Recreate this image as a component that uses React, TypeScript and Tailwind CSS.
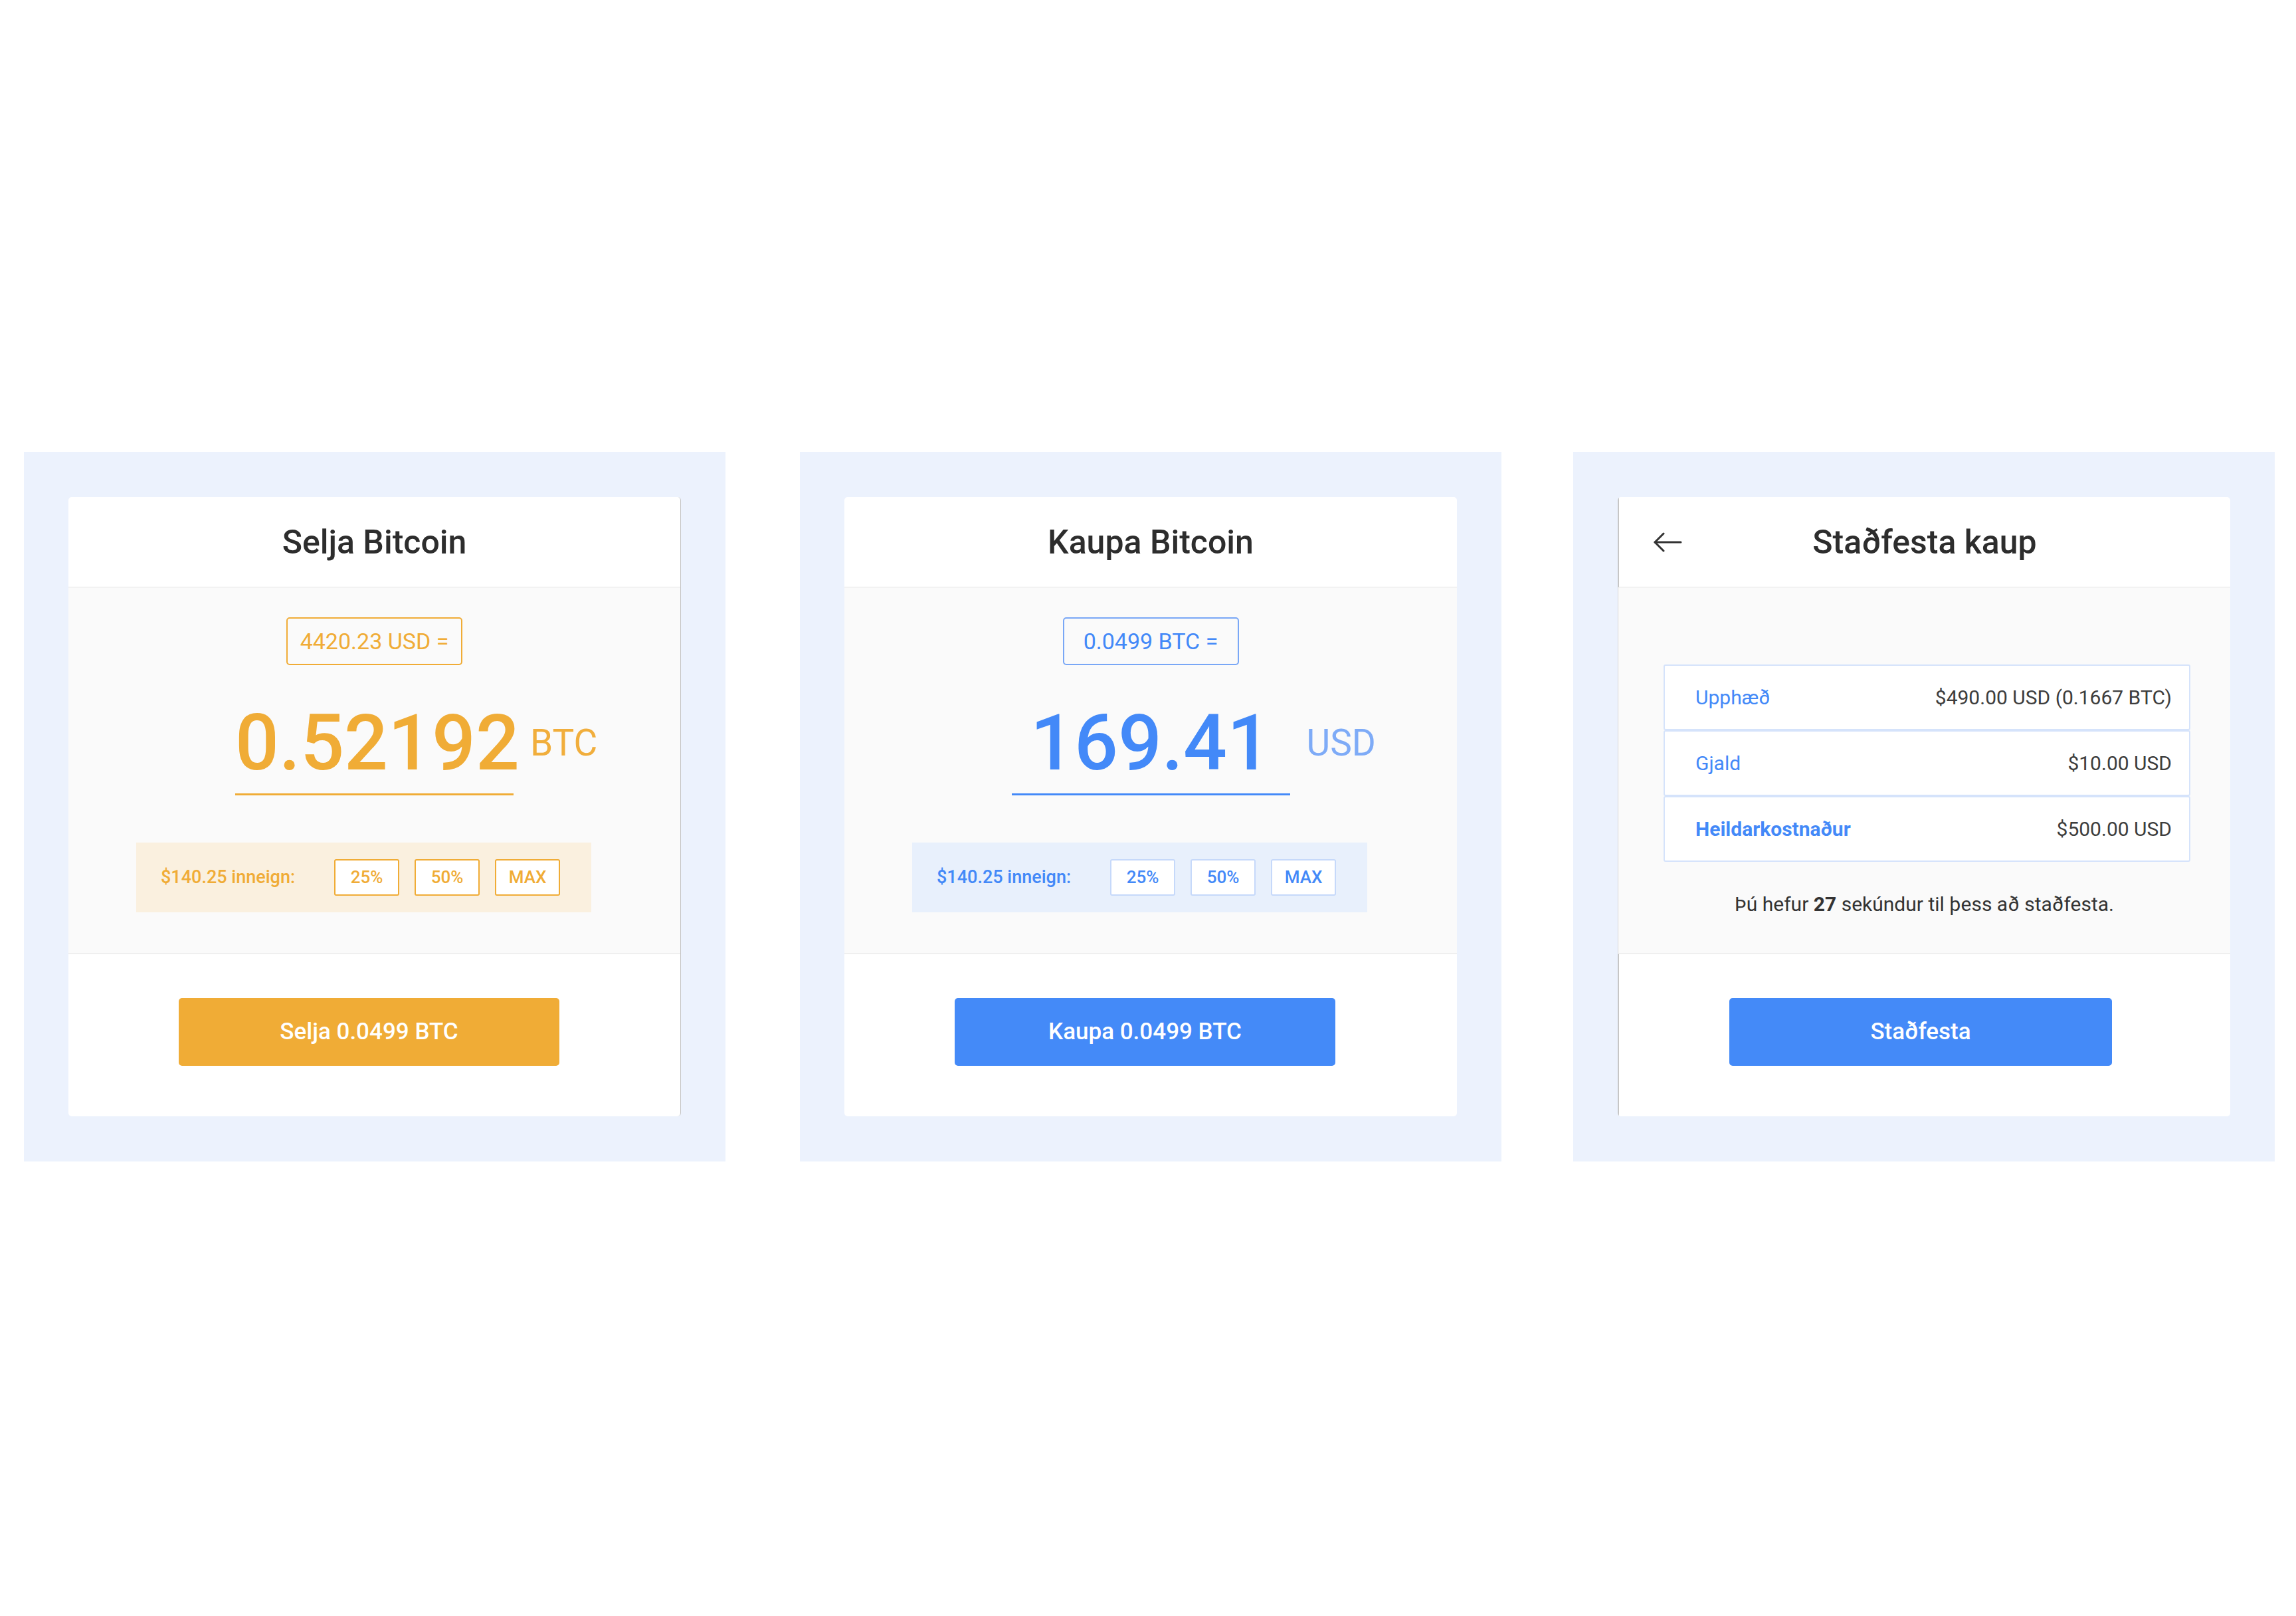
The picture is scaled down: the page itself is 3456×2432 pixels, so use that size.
import React from "react";

type Theme = {
  boxBorder: string;
  text: string;
  currency: string;
  underline: string;
  band: string;
  pct: string;
  btn: string;
};

const orange: Theme = {
  boxBorder: "border-[#f0ac36]",
  text: "text-[#f0ac36]",
  currency: "text-[#f1ae3c]",
  underline: "border-[#f0ac36]",
  band: "bg-[#faf0df]",
  pct: "border-[#f0ac36] text-[#f0ac36]",
  btn: "bg-[#f0ac36]",
};

const blue: Theme = {
  boxBorder: "border-[#79a7f6]",
  text: "text-[#4389f8]",
  currency: "text-[#7eabf7]",
  underline: "border-[#4389f8]",
  band: "bg-[#e8f0fc]",
  pct: "border-[#c6d9fa] text-[#4389f8]",
  btn: "bg-[#448af8]",
};

function Header({ title }: { title: string }) {
  return (
    <div className="h-[136px] border-b border-[#e3e3e3] flex items-center justify-center">
      <span className="text-[50px] font-medium text-[#2d2d2d] leading-none">{title}</span>
    </div>
  );
}

function TradeCard({
  theme,
  title,
  box,
  amount,
  currency,
  button,
  edge,
}: {
  theme: Theme;
  title: string;
  box: string;
  amount: string;
  currency: string;
  button: string;
  edge: string;
}) {
  return (
    <div className={`w-[922px] h-[932px] bg-white rounded-[5px] overflow-hidden flex flex-col ${edge}`}>
      <Header title={title} />
      <div className="h-[552px] bg-[#fafafa] border-b border-[#e3e3e3] flex flex-col pt-[45px]">
        <div
          className={`self-center w-[265px] h-[72px] border-2 rounded-[5px] flex items-center justify-center text-[34px] ${theme.boxBorder} ${theme.text}`}
        >
          {box}
        </div>
        <div className="mt-[59px] grid grid-cols-[1fr_419px_1fr] items-start">
          <div />
          <div
            className={`text-[116px] leading-none font-medium text-center pb-[18px] border-b-[3px] whitespace-nowrap ${theme.text} ${theme.underline}`}
          >
            {amount}
          </div>
          <div className={`h-[116px] flex items-center pl-[25px] text-[55px] leading-none ${theme.currency}`}>
            {currency}
          </div>
        </div>
        <div className={`mt-[71px] ml-[102px] w-[685px] h-[105px] flex items-center pl-[37px] ${theme.band}`}>
          <span className={`w-[261px] text-[27px] font-medium ${theme.text}`}>$140.25 inneign:</span>
          <div className="flex gap-[23px]">
            {["25%", "50%", "MAX"].map((p) => (
              <div
                key={p}
                className={`w-[98px] h-[55px] border-2 rounded-[3px] bg-white flex items-center justify-center text-[26px] font-medium ${theme.pct}`}
              >
                {p}
              </div>
            ))}
          </div>
        </div>
      </div>
      <div className="h-[244px] pt-[66px] pl-[166px]">
        <div
          className={`w-[573px] h-[102px] rounded-[5px] flex items-center justify-center text-white text-[35px] font-medium ${theme.btn}`}
        >
          {button}
        </div>
      </div>
    </div>
  );
}

function ConfirmCard() {
  const rows: { label: string; value: string; bold?: boolean }[] = [
    { label: "Upphæð", value: "$490.00 USD (0.1667 BTC)" },
    { label: "Gjald", value: "$10.00 USD" },
    { label: "Heildarkostnaður", value: "$500.00 USD", bold: true },
  ];
  return (
    <div className="w-[922px] h-[932px] bg-white rounded-[5px] overflow-hidden flex flex-col">
      <div className="h-[136px] border-b border-[#e3e3e3] border-l-2 border-l-[#c6c6c6] grid grid-cols-[1fr_auto_1fr] items-center">
        <div className="pl-[51px] flex items-center">
          <svg width="44" height="30" viewBox="0 0 44 30" fill="none">
            <path d="M3 15 H42" stroke="#333" strokeWidth="3" strokeLinecap="round" />
            <path d="M16 2 L3 15 L16 28" stroke="#333" strokeWidth="3" strokeLinecap="round" strokeLinejoin="round" />
          </svg>
        </div>
        <span className="text-[50px] font-medium text-[#2d2d2d] leading-none">Staðfesta kaup</span>
        <div />
      </div>
      <div className="h-[552px] bg-[#fafafa] border-b border-[#e3e3e3] border-l border-l-[#d6d6d6] flex flex-col pt-[116px]">
        <div className="ml-[68px] w-[793px] flex flex-col">
          {rows.map((r) => (
            <div
              key={r.label}
              className="h-[99px] bg-white border-2 border-[#d5e3fb] rounded-[3px] flex items-center justify-between pl-[46px] pr-[26px] text-[30px]"
            >
              <span className={`text-[#4389f8] ${r.bold ? "font-bold" : ""}`}>{r.label}</span>
              <span className="text-[#3d3d3d]">{r.value}</span>
            </div>
          ))}
        </div>
        <p className="mt-[46px] text-center text-[30px] leading-[35px] text-[#333]">
          Þú hefur <b className="font-bold">27</b> sekúndur til þess að staðfesta.
        </p>
      </div>
      <div className="h-[244px] pt-[66px] pl-[166px] border-l-2 border-l-[#c6c6c6]">
        <div className="w-[576px] h-[102px] rounded-[5px] flex items-center justify-center text-white text-[35px] font-medium bg-[#448af8]">
          Staðfesta
        </div>
      </div>
    </div>
  );
}

function Panel({ children, className }: { children: React.ReactNode; className?: string }) {
  return <div className={`w-[1056px] h-[1068px] bg-[#ecf2fd] pt-[68px] pl-[67px] ${className ?? ""}`}>{children}</div>;
}

export default function App() {
  return (
    <div className="w-[3456px] h-[2432px] bg-white font-['Roboto',sans-serif] pt-[680px] pl-[36px] flex items-start">
      <Panel>
        <TradeCard
          theme={orange}
          title="Selja Bitcoin"
          box="4420.23 USD ="
          amount="0.52192"
          currency="BTC"
          button="Selja 0.0499 BTC"
          edge="border-r border-r-[#c4c4c4]"
        />
      </Panel>
      <Panel className="ml-[112px]">
        <TradeCard
          theme={blue}
          title="Kaupa Bitcoin"
          box="0.0499 BTC ="
          amount="169.41"
          currency="USD"
          button="Kaupa 0.0499 BTC"
          edge=""
        />
      </Panel>
      <Panel className="ml-[108px]">
        <ConfirmCard />
      </Panel>
    </div>
  );
}
